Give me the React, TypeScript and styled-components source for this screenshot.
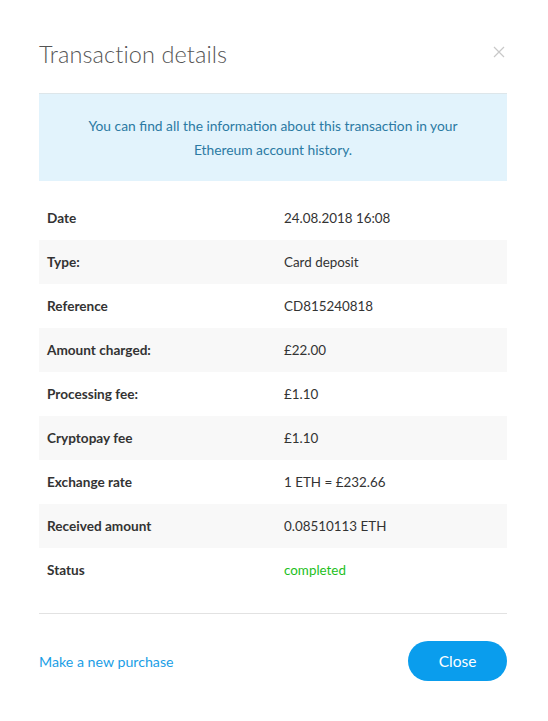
import React from "react";
import styled, { createGlobalStyle } from "styled-components";

const Global = createGlobalStyle`
  html, body { margin: 0; padding: 0; background: #fff; }
  body { font-family: Lato, "Open Sans", sans-serif; color: #333; }
`;

const Modal = styled.div`
  width: 548px;
  box-sizing: border-box;
  padding: 0 41px 0 39px;
`;

const Header = styled.div`
  display: flex;
  justify-content: space-between;
  align-items: center;
  height: 93px;
  padding-top: 16px;
  box-sizing: border-box;
`;

const Title = styled.h1`
  margin: 0;
  font-weight: 300;
  font-size: 23.5px;
  color: #555;
  letter-spacing: 0.1px;
  padding-bottom: 2px;
`;

const CloseX = styled.button`
  border: 0;
  background: none;
  padding: 0;
  margin: 0 2px 6px 0;
  width: 12px;
  height: 12px;
  display: flex;
  cursor: pointer;
`;

const Info = styled.div`
  background: #e2f3fc;
  border-top: 1px solid #dde6ea;
  padding: 20px 30px 19px;
  text-align: center;
  font-size: 13.8px;
  line-height: 24px;
  color: #2b7aa3;
`;

const Table = styled.div`
  margin-top: 15px;
  display: flex;
  flex-direction: column;
`;

const Row = styled.div<{ $shade: boolean }>`
  display: grid;
  grid-template-columns: 237px 1fr;
  height: 44px;
  align-items: center;
  padding-left: 8px;
  background: ${(p) => (p.$shade ? "#f8f8f8" : "#fff")};
`;

const Label = styled.span`
  font-weight: 700;
  font-size: 13.6px;
  color: #333;
`;

const Value = styled.span<{ $status?: boolean }>`
  font-size: 13.4px;
  color: ${(p) => (p.$status ? "#1dbf1d" : "#333")};
`;

const Divider = styled.hr`
  margin: 21px 0 0;
  border: 0;
  border-top: 1px solid #e2e2e2;
`;

const Footer = styled.div`
  display: flex;
  justify-content: space-between;
  align-items: center;
  padding-top: 27px;
`;

const Link = styled.a`
  color: #1a9ee6;
  font-size: 14.2px;
  text-decoration: none;
  cursor: pointer;
`;

const Button = styled.button`
  width: 99px;
  height: 40px;
  border: 0;
  border-radius: 20px;
  background: #0a9ded;
  color: #fff;
  font-family: inherit;
  font-size: 15.5px;
  cursor: pointer;
`;

const rows: [string, string, boolean?][] = [
  ["Date", "24.08.2018 16:08"],
  ["Type:", "Card deposit"],
  ["Reference", "CD815240818"],
  ["Amount charged:", "£22.00"],
  ["Processing fee:", "£1.10"],
  ["Cryptopay fee", "£1.10"],
  ["Exchange rate", "1 ETH = £232.66"],
  ["Received amount", "0.08510113 ETH"],
  ["Status", "completed", true],
];

export default function App() {
  return (
    <>
      <Global />
      <Modal>
        <Header>
          <Title>Transaction details</Title>
          <CloseX aria-label="Close">
            <svg width="12" height="12" viewBox="0 0 12 12">
              <path d="M1 1L11 11M11 1L1 11" stroke="#c8c8c8" strokeWidth="1.2" />
            </svg>
          </CloseX>
        </Header>
        <Info>
          You can find all the information about this transaction in your
          <br />
          Ethereum account history.
        </Info>
        <Table>
          {rows.map(([l, v, s], i) => (
            <Row key={l} $shade={i % 2 === 1}>
              <Label>{l}</Label>
              <Value $status={!!s}>{v}</Value>
            </Row>
          ))}
        </Table>
        <Divider />
        <Footer>
          <Link>Make a new purchase</Link>
          <Button>Close</Button>
        </Footer>
      </Modal>
    </>
  );
}
